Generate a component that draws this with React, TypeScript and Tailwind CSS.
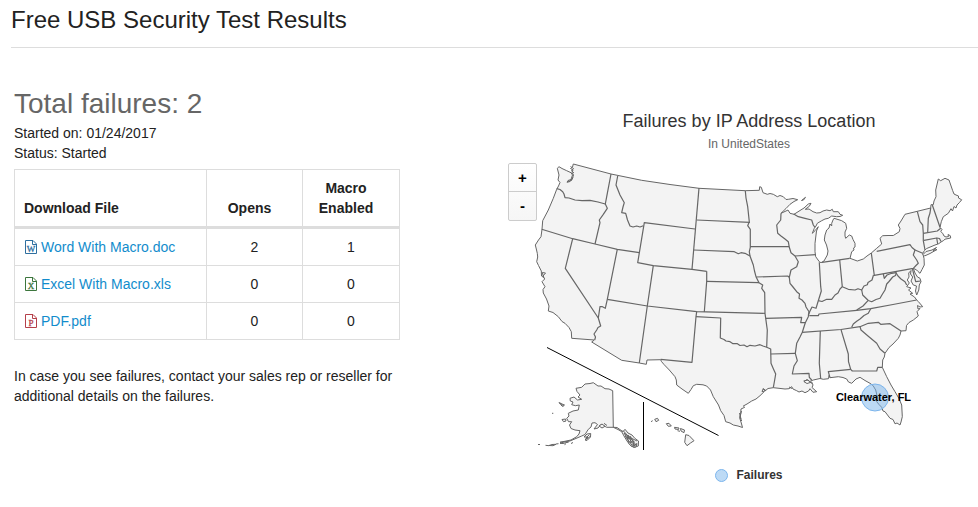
import { useState } from "react";

type FileRow = {
  name: string;
  letter: string;
  color: string;
  opens: number;
  macros: number;
};

const files: FileRow[] = [
  { name: "Word With Macro.doc", letter: "W", color: "#2f6f9f", opens: 2, macros: 1 },
  { name: "Excel With Macro.xls", letter: "X", color: "#3c763d", opens: 0, macros: 0 },
  { name: "PDF.pdf", letter: "P", color: "#b5404a", opens: 0, macros: 0 },
];

/* Coast and outer border of the lower 48, clockwise from Puget Sound */
const MAINLAND =
  "M573.3 164L611 174L641.7 180.3L670 184.5L699 188.3L745.3 190.7L759.3 190.3L759.7 186.7L761.3 187.3L763 192.7L767.3 194.3L770 193.5L773.3 194.3L777.3 196.7L780 195.5L783.3 196.7L786 199.5L788.3 199.3L793 198.5L797.7 199.7L794 201.5L790 204.3L786 208.5L781 213.3L786 211L788 210L790 213.3L794 214.3L800 210.5L804 208L808.3 204L811 203.3L809.3 206.3L805.3 209.3L809 209L813 211.7L816.7 213L820 212.7L823 211L826.7 210L830 210.7L832.3 209.3L833.3 211.7L838.3 211.7L840 214.3L842.7 215.3L840 216.5L836.7 216.7L831.7 216L828.3 218.3L825 219L821.7 220.7L817.3 223.3L816 226L814.3 228.3L812.3 233.3L815 230.7L818.3 226.7L816.5 231L816 235L815 243.3L815 251.7L815.7 256.7L819.3 261.7L821 262.7L824 261L827.3 255L828 251L826.5 245L824.3 240L825 235L826.7 230L829 228L830 224L831.7 226L831.7 223.3L833 220L834 218.3L838 219.5L841.7 220.7L845.7 223.3L846.7 228.3L845 232L845 236L845.7 238.3L849.3 235L851.7 236L853 239.5L855 243.3L855 247L853.5 248L854 250L851.7 251.7L850 258.3L857.3 261L863.3 259L867 256L871.3 253L876.7 248.3L881.7 244L880 238.3L882.7 235.7L888 235.5L893.3 235.5L899.3 231.7L900 228.5L898.3 225L901 221L905 214.3L917.3 211.3L930.7 208L931 204.7L933.3 204.7L934 201L936 196.7L935.7 190L938.3 179L940.7 180.7L945 178.3L949 180L952.7 190.7L954 194L956 195L958.5 196L958.5 198L961.7 199.8L959.3 202.7L957 205L956 208L954 206.5L952.5 211L951 208.7L948.3 213.3L943.3 216.7L941.3 221.7L940 227.3L942 229.5L940.7 231.5L942.7 233.3L944 236L946 237L948.5 236.5L948 234.5L950.3 235.7L950.7 238L945 239.2L943.3 240.7L941 242L938.7 243.7L935 245L926.7 248.5L924.5 250.5L922.7 253.3L924 258.3L924.3 265L922 269.5L920 273.3L918 271.5L916.7 270L913.3 268.3L915 273L917.5 277L920 278.3L921 281.7L919.3 285L918.8 290L916.7 295L915.5 291L916.5 286L913.3 285L911 281L912.7 277L910.5 274L911 270.5L908.7 273L909 277L907.3 280L909.3 283L906.7 286.7L911 288L908.5 290L912.7 293.3L910 294L914.5 297L916.7 300L918.3 301.5L922.7 306.7L920 307L917.5 305.5L918 309L920 308.5L917 311.7L918.3 316L913.3 320L909 322.5L906.5 325.5L906 330.7L901 331L900 335L898.3 338.3L893 344L889 347.5L885 353.3L884.3 357L882.7 360L882.3 367.3L886.7 376.7L891 385L895 391.7L899 398.5L901.7 405L902.3 416.7L901 422L900 425L897 423L895 423.8L893 419.5L890 418.3L887.5 415L885 411.7L883 411L881.7 407.3L879 404.5L876.7 401.7L877.3 397L875.7 390L873 385.5L870 383.3L865 380.5L860 377.3L856 379L851.7 383.3L848.5 382L846.7 379L843 377.5L838.3 376.7L830 377.7L829 375.5L828.5 378.7L823.3 379.3L820 378.5L813.3 380L809.5 381.5L807 379.5L804 381.7L807 383.5L811.7 382L813 385L812 387.5L816.7 391.7L813 392.3L810 388.7L808.5 391L805 392.7L802 391L799 392L796.7 390.7L793 389L791.7 386.7L789 388.7L785 389L779 388.3L773.3 387.7L768 388.5L765 391L763.3 388.5L762 391.5L764.5 391.3L760 395.7L756 399L751.7 401L747 404L743.3 406L744.7 407.3L741 409L740.7 413.3L739.7 418L741.3 423L742.5 427.5L738 426L733.3 425L730 423L725.7 421.7L724 415.5L720.7 410.7L718.5 405L713.3 396.7L710.5 390L706.7 386L703 384.8L696.7 384.3L693.3 385.7L691 389.5L688.3 393.3L682 389L676.7 385L676.3 380L675 376.7L669.3 370L664 364.5L661.3 361.3L660.7 359.7L647 360L646.3 364.3L639.3 363L621.7 360.3L591.7 342L594.3 340L571.7 338.3L571.3 331.7L569 327.5L565 323.3L562 321.5L558.3 316.7L553 312.5L548.3 311L549 306L546.5 299L543.3 293L543 289.5L545 286.7L542 281.7L544.7 279L543 276L545.5 273L542.3 272.5L543.7 277.5L541.5 276L541.3 271L538.5 265.5L536.7 261.7L537.7 257L537.3 253.3L536.3 249L535.3 245L538.5 240L541 236.7L542 229.3L542.7 220.7L548.3 210L553.3 198.3L556.7 189.3L558.5 186L560 182.5L558 180L559 175L557.3 168.3L559 166.7L562 168.5L566.7 170.7L571 172.7L572.5 175L571 179.5L568 180.5L567 182.3L570 181.5L572.5 178L573.5 175L572 172.5L573 170L570.5 168.5L572.5 167Z";

/* Inlets too small to belong to the outline: Puget Sound, Padre Island, the bays */
const INLETS =
  "M570.5 166.5L573.5 168.5L571.5 171L574 173M567.5 181.5L571.5 180.5L573 177.5M741.5 411L740 417L741.7 421M739.5 413L741 419M763 389L765.5 390M789 387L792 388.5M803.5 381L808 380L812 383.5";

const STATE_BORDERS = [
  // Pacific Northwest and California
  "M556.7 188.7L560 189.5L562.7 191.7L564 194L565 197.7L569 198L575 200L582 200.7L590 200.3L598 202L605.3 204",
  "M611 174L606.7 196.7L605.3 204L607.3 208.3L603.3 214.3L599.3 220L600 222.7L595 244",
  "M541.7 229.3L572.7 238.7L595 244L617.3 249.3L639.3 252.7",
  "M572.7 238.7L565.3 268.3L598.3 318L600.7 326L598 327.5L596.7 330L594 334L595.5 337L594.7 340",
  "M617.3 249.3L607.3 299.3L605.3 308.3L602 306.5L600 306.7L598.3 318",
  // Mountain states
  "M617.7 176L616 185L618 190L620 195L624.3 202.7L623 207L621.7 212.7L625.7 213.3L627.5 220L630 226L633 227L636.7 226L640 227L643.3 225.7",
  "M695 229L644.3 222.7L637.7 262.7L653.3 265.7L692 269.3L706.7 271.3",
  "M699 188L692 269.3",
  "M607.3 299.3L647.3 306L696.7 311.7L765 313.3",
  "M653.3 265.7L647.3 306L639.3 363",
  "M696.7 311.7L696 316.7L692 362.3L660.7 359.3",
  "M706.7 271.3L706.7 281.3L704.3 312",
  // Plains
  "M696.7 220L750 222.3",
  "M693.7 250L734.3 251.7L738.3 253.7L741 252.7L745 253.3L750 256",
  "M706.7 281.3L759 282.7",
  "M745.3 190.7L746 198L747.7 206.7L749.3 221.7L747.7 225.7L750.3 229.3L750.3 247.3L749.3 251.7L750 256L753.3 265L754.5 271L756 276.7L759 282.7L762.7 285L761.7 288.3L764.7 292.7L765 313.3L765.7 318.3L767.3 330L766.7 347.3L770.7 349L771 363.3L773 368L775.7 374L774.5 381L773.3 387.7",
  "M696 316.7L720.7 318L720.3 338L724 339.5L726 341L730 341.7L733 343.7L737 343.5L740 345.5L744 345L747 346.7L750 345.3L755 346L760 344.7L763 346L766.7 347.3",
  "M750.3 246.7L789 246.7",
  "M756 277L787.7 276L789.3 277.3",
  "M765.7 318.3L801.7 317.3L800.7 322.7L805.3 322.7",
  "M770.7 354L795.3 353.3",
  // Mississippi river
  "M781 213.3L780.7 220L776.7 225L777.7 233.3L781 236L785 239L788.3 241.7L789.3 247.3L791 252.7L795 256L798.3 261.7L796.7 266.7L791 270L789.3 277.3L790 283.3L793 287L796.7 291.7L799.5 294L799 298.3L802 300L805 303.3L806 307L809 311.7L808.3 316.7L805.3 322.7L802.3 332.3L800 337L796.7 343.3L795.3 353.3L797.3 360.7L794 366L792.3 374L809 373.3L809.3 377.3L811.7 380",
  // Great Lakes
  "M795 256L815.7 254.7",
  "M793.7 214L798.3 216.7L805 218.3L811.7 220L813.3 225L815 227.3",
  "M819.3 262.3L820.7 286.7L821.3 291L818.3 300.7L816 308.3L812 307L810 311L808.3 315",
  "M822 262.3L849.7 258.3",
  "M839.7 260L842.3 286.7",
  "M818.3 300.7L822 301.5L826.7 299.3L831.7 299.3L835 295L838 293L840 289L842.3 286.7L848.3 289.3L855 290L858 288.7L861.7 290L864 286L867.3 284.7L868 282.5L872 280L873.5 275",
  "M861.7 290L862.7 295L868.3 300.5L871.7 301.7L876 299.5L880 298.3L882.5 294L885 290L886.7 284L889 281.5L892.7 277L895.5 275.5L896.5 272.5",
  // Appalachia and the South
  "M868 300.7L863 306L856.7 310",
  "M809.3 315.7L818.3 315.7L819 314L856.7 310.3L870.7 308.7L893 304.5L916.7 300",
  "M870.7 308.7L868.3 313.3L864 315.5L860 319L856.7 321.3L853.3 324L851.7 327.3",
  "M802 332.3L841 329.5L860 326.7L868.3 323.3L878.3 322.3L880.7 324.3L890 323.7L901 331",
  "M860 326.7L861 330L868 336L876.7 343.3L880 349L885 353.3",
  "M841 329.7L848.3 354L848.5 361.7L850.7 369.3L852.3 371L876.7 371L877.7 367.3L882.3 367.3",
  "M850.7 369.3L828.3 371.7L830 377.7",
  "M820.3 331L819.3 363.3L820.7 378.7",
  // Northeast
  "M871.3 253L874.3 275.3L913.3 268.3L916 265.5L918.3 263.3L916.7 260L913.3 255L915 250L912 247.5L910 244.7L876.7 251.3",
  "M915 250L922.7 253.3",
  "M883.3 274L884.3 278.3L887 275L891.7 273.3L896 272.7L898 276L901 279L905 281.7L906.7 285",
  "M912.3 268.3L915.7 281.7L920.7 281",
  "M917.3 211.3L920 221.7L922.7 225L923.3 233.3L923.3 240.7L925 250",
  "M930.7 208L930 213L928.3 218.3L927.7 232.3",
  "M923.3 233.3L937.3 231L940.7 228.3",
  "M932.3 205L940 227.3",
  "M924 240.3L936.7 238L937.7 244",
  "M936.7 238L939.5 238.5L941 241.5",
];

/* Long Island, Isle Royale */
const ISLANDS =
  "M923 254.5L926 251.5L932 250L936.5 247.5L933 250.5L937 249.5L930 253.5L924.5 256ZM801.5 200.5L805.5 197.3L803.5 200Z";

const ALASKA =
  "M612.7 390.7L609 389L605 388.7L601 386L598 386L593.3 382.7L590 383.5L585 384L581.7 387.3L576 388.3L577 391.5L580 395L578 397L581.7 399.3L577.5 400L574 397L570 398.3L570.3 401L573 402L571.7 404.7L575.5 405.7L579.3 405L578.3 410L573 411L568.3 413.3L569 416L566.7 418.3L568.5 421.7L571.7 421.7L569.5 425L571 428.5L575 430L580 430.7L579 434L576.7 436.7L571 440L560 442.3L570 441L581.7 436L585 434.5L588.3 429.3L591 427L592 423L595 422.7L597.5 424.5L594 429L598 428L601 424.3L606.7 427.3L613.3 427.3L618 429.5L621.7 431.7L624 436L627 441L630 445L634 447.5L638.3 446L638.5 441L635 438.5L632 435L628 433L625 429.3L623 431.7L617 427.5L613.3 427.3Z";

const ALASKA_ISLANDS = [
  "M559 402.5L562 404L564.5 405L562.5 406.5L560.5 404.5ZM560 403L563.5 406",
  "M562 419.5L565.5 419L566 421L563.5 421.7Z",
  "M552 413.3h1.3",
  "M584 437L587 434L590.7 433.5L590.5 437L587 440.5L585 440L588 437ZM585.5 438.5L589.5 434.5M586.5 439.5L590 436.5",
  "M538 444.5h2M545.5 445.3L549 445.7M549 445.5L552 444.5L556 444.3L553 445.7ZM556 444L558.5 443.7M560 443.3L565 441.7L568.5 442L563 443.5ZM564.5 444.7L566 443.7M571 443.5L573 442.5",
  "M624 433L628 436L627 439L631 438L630 443L634 441L633 446L637 443.5L636 447L631.5 446.5L629 443.5L627.5 438.5ZM626 434L631 441L635 446M623 430.5L629 437L637 441M630 436L633.5 441.5M625 436L632 445M628 435L636 445M631 445L637 445",
  "M599 426L602 424L605 426.3L602 428ZM604 423.3L607 425.5",
];

const HAWAII = [
  "M651 421.7L652.7 420.7M654.7 419.3L657.5 418.3L658.7 420.3L656 421.7Z",
  "M666.3 423.7L669 423.3L671.3 426L668.3 426.3Z",
  "M674.5 427.3L679 428L678.5 429.5L675 429Z",
  "M677.5 430.7L680 431.3M680.5 428.5L684.5 430L684 432.7L681 431Z",
  "M685.7 434.7L689 435.5L694 440.7L690.5 443L687 445.7L684.7 442.3Z",
];

function FileIcon({ letter, color }: { letter: string; color: string }) {
  return (
    <svg aria-hidden width="12" height="14" viewBox="0 0 12 14" fill="none" className="shrink-0">
      <path d="M0.5 0.5H8L11.5 4V13.5H0.5ZM7.5 0.5V4.5H11.5" stroke={color} />
      <text
        x="6"
        y="12"
        textAnchor="middle"
        fill={color}
        stroke={color}
        strokeWidth="0.3"
        fontSize="9"
        fontFamily="'Liberation Serif', serif"
      >
        {letter}
      </text>
    </svg>
  );
}

function FailuresTable() {
  return (
    <table className="w-full table-fixed border-collapse border border-[#dddddd]">
      <colgroup>
        <col className="w-[192px]" />
        <col className="w-[96px]" />
        <col />
      </colgroup>
      <thead>
        <tr className="border-b-3 border-[#dddddd] align-bottom">
          <th className="p-2 pl-[9px] text-left">Download File</th>
          <th className="border-x border-[#dddddd] py-2 pr-[18px] pl-2 text-center">Opens</th>
          <th className="py-2 pr-[18px] pl-2 text-center">Macro Enabled</th>
        </tr>
      </thead>
      <tbody>
        {files.map((f) => (
          <tr key={f.name} className="border-b border-[#dddddd]">
            <td className="p-2 pl-[10px]">
              <a href="#" className="flex items-center gap-1 text-[#128ccc] hover:underline">
                <FileIcon letter={f.letter} color={f.color} />
                {f.name}
              </a>
            </td>
            <td className="border-x border-[#dddddd] p-2 text-center">{f.opens}</td>
            <td className="p-2 text-center">{f.macros}</td>
          </tr>
        ))}
      </tbody>
    </table>
  );
}

function FailuresMap() {
  const [zoom, setZoom] = useState(1);

  const w = 458 / zoom;
  const h = 304 / zoom;
  const viewBox = `${749 - w / 2} ${308 - h / 2} ${w} ${h}`;

  return (
    <div className="relative">
      <svg viewBox={viewBox} className="block w-full" role="img" aria-label="Failures by state">
        <g fill="#f3f3f3" stroke="#666666" strokeLinejoin="round">
          <path d={MAINLAND} />
          <path d={INLETS} fill="none" />
          <path d={ISLANDS} />
          <path d={ALASKA} />
          {ALASKA_ISLANDS.map((d) => (
            <path key={d} d={d} />
          ))}
          {HAWAII.map((d) => (
            <path key={d} d={d} />
          ))}
        </g>
        <g fill="none" stroke="#666666" strokeWidth="1.2" strokeLinejoin="round">
          {STATE_BORDERS.map((d) => (
            <path key={d} d={d} />
          ))}
        </g>
        {/* Inset separators */}
        <path d="M547 347.5L718.5 435.5M643.5 402V450" stroke="#000000" />
        <circle cx="875" cy="397.5" r="13.5" fill="#7cb5ec" fillOpacity="0.5" stroke="#7cb5ec" />
        <text
          x="873.5"
          y="401"
          textAnchor="middle"
          fontSize="11"
          fontWeight="bold"
          fontFamily="'Liberation Sans', sans-serif"
        >
          Clearwater, FL
        </text>
      </svg>

      <div className="absolute top-[7px] -left-3 flex w-[29px] flex-col overflow-hidden rounded-xs border border-[#cccccc] bg-gradient-to-b from-white to-[#f6f6f6] text-[15px] leading-5 font-bold text-black">
        <button
          type="button"
          aria-label="Zoom in"
          onClick={() => setZoom((z) => Math.min(z * 2, 8))}
          className="h-7 border-b border-[#cccccc]"
        >
          +
        </button>
        <button
          type="button"
          aria-label="Zoom out"
          onClick={() => setZoom((z) => Math.max(z / 2, 1))}
          className="h-7"
        >
          -
        </button>
      </div>
    </div>
  );
}

export default function App() {
  return (
    <main className="bg-white pb-4 font-['Liberation_Sans',Arial,sans-serif] text-sm leading-5 text-[#222222]">
      <header className="ml-[11px] border-b border-[#dddddd] pt-1 pb-[11px]">
        <h1 className="text-2xl leading-8">Free USB Security Test Results</h1>
      </header>

      <div className="flex items-start pl-[14px]">
        <section className="w-[386px] shrink-0 pt-[39px]">
          <h2 className="mb-[2px] text-[28px] leading-[34px] text-[#666666]">Total failures: 2</h2>
          <p>Started on: 01/24/2017</p>
          <p className="mb-[6px]">Status: Started</p>
          <FailuresTable />
          <p className="mt-[26px]">
            In case you see failures, contact your sales rep or reseller for additional details on
            the failures.
          </p>
        </section>

        <section className="ml-[120px] flex-1 pt-[61px]">
          <div className="text-center">
            <h3 className="text-lg leading-6 text-[#333333]">Failures by IP Address Location</h3>
            <p className="mt-px mb-[2px] text-xs leading-5 text-[#666666]">In UnitedStates</p>
          </div>
          <FailuresMap />
          <div className="mt-[3px] flex items-center justify-center gap-2 text-xs leading-6 font-bold text-[#333333]">
            <svg aria-hidden width="13" height="13" viewBox="0 0 13 13">
              <circle cx="6.5" cy="6.5" r="6" fill="#7cb5ec" fillOpacity="0.5" stroke="#7cb5ec" />
            </svg>
            Failures
          </div>
        </section>
      </div>
    </main>
  );
}
